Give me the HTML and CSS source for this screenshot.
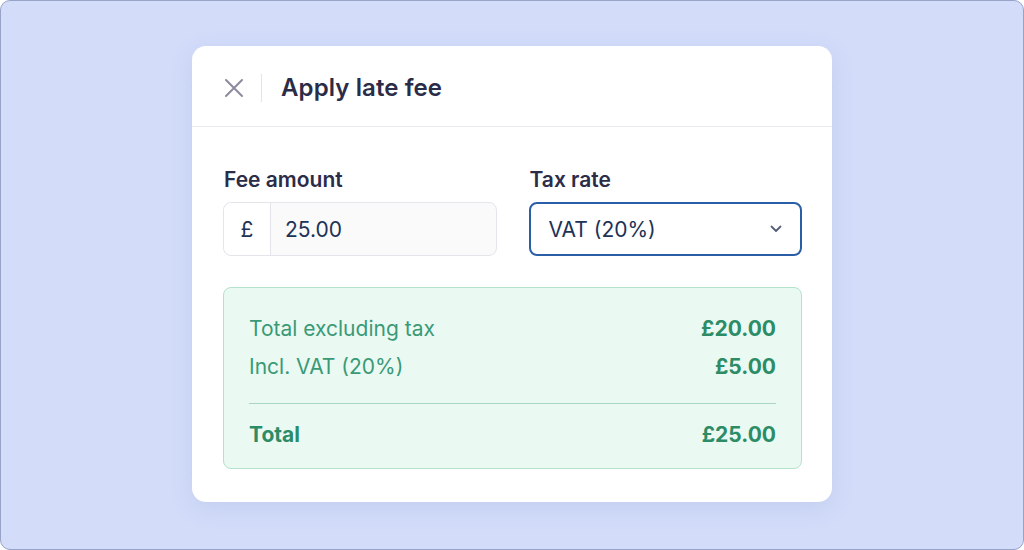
FILE: index.html
```html
<!DOCTYPE html>
<html lang="en">
<head>
<meta charset="UTF-8" />
<meta name="viewport" content="width=device-width, initial-scale=1" />
<title>Apply late fee</title>
<link rel="stylesheet" href="styles.css">
</head>
<body>

<div class="stage">
  <section class="dialog">
    <header class="dialog-head">
      <button class="close-btn" aria-label="Close">
        <svg width="20" height="20" viewBox="0 0 20 20" fill="none" stroke="currentColor" stroke-width="2" stroke-linecap="round">
          <path d="M2 2L18 18M18 2L2 18" />
        </svg>
      </button>
      <span class="head-divider"></span>
      <h1 class="dialog-title">Apply late fee</h1>
    </header>

    <div class="dialog-body">
      <div class="fields">
        <div class="field">
          <label class="field-label">Fee amount</label>
          <div class="money-input">
            <span class="currency">£</span>
            <span class="amount">25.00</span>
          </div>
        </div>
        <div class="field">
          <label class="field-label">Tax rate</label>
          <div class="select">
            <span>VAT (20%)</span>
            <svg width="12" height="8" viewBox="0 0 12 8" fill="none" stroke="currentColor" stroke-width="1.8" stroke-linecap="round" stroke-linejoin="round">
              <path d="M1.5 1.5L6 6L10.5 1.5" />
            </svg>
          </div>
        </div>
      </div>

      <div class="summary">
        <div class="summary-row">
          <span>Total excluding tax</span>
          <strong>£20.00</strong>
        </div>
        <div class="summary-row">
          <span>Incl. VAT (20%)</span>
          <strong>£5.00</strong>
        </div>
        <hr class="summary-rule">
        <div class="summary-row total">
          <span>Total</span>
          <strong>£25.00</strong>
        </div>
      </div>
    </div>
  </section>
</div>

</body>
</html>
```

FILE: styles.css
```css
* {
  box-sizing: border-box;
  margin: 0; padding: 0;
}
body {
  font-family: Inter, 'Noto Sans', sans-serif;
  width: 1024px;
  height: 550px;
  overflow: hidden;
}
.stage {
  width: 1024px;
  height: 550px;
  background: #d3ddfa;
  border: 1px solid #98a3c9;
  border-radius: 10px;
  padding-top: 45px;
  display: flex;
  justify-content: center;
  align-items: flex-start;
}
.dialog {
  width: 640px;
  background: #fff;
  border-radius: 14px;
  box-shadow: 0 6px 24px rgb(70 90 160 / 0.12);
}
.dialog-head {
  height: 81px;
  display: flex;
  align-items: center;
  padding: 3px 32px 0;
  border-bottom: 1px solid #e8e9ee;
}
.close-btn {
  background: none;
  border: none;
  color: #8a8b9c;
  width: 20px;
  height: 20px;
  display: flex;
  cursor: pointer;
}
.head-divider {
  width: 1px;
  height: 28px;
  background: #e3e4ea;
  margin: 0 19px 0 17px;
}
.dialog-title {
  font-size: 24px;
  font-weight: 600;
  color: #2b2c48;
  letter-spacing: 0.1px;
}
.dialog-body {
  padding: 39px 30px 33px 31px;
}
.fields {
  display: grid;
  grid-template-columns: 1fr 1fr;
  gap: 32px;
}
.field {
  display: flex;
  flex-direction: column;
  gap: 8px;
}
.field-label {
  font-size: 21px;
  font-weight: 600;
  color: #2b2c48;
  line-height: 28px;
  padding-left: 1px;
}
.money-input {
  height: 54px;
  display: flex;
  border: 1px solid #e4e5ea;
  border-radius: 8px;
  background: #fafafa;
  font-size: 21px;
  color: #203256;
}
.currency {
  width: 47px;
  display: flex;
  align-items: center;
  justify-content: center;
  border-right: 1px solid #e4e5ea;
  background: #fff;
  border-radius: 8px 0 0 8px;
}
.amount {
  display: flex;
  align-items: center;
  padding-left: 14px;
}
.select {
  height: 54px;
  display: flex;
  align-items: center;
  justify-content: space-between;
  border: 2px solid #2a5ea6;
  border-radius: 8px;
  padding: 0 18px 0 18px;
  font-size: 21px;
  color: #203256;
}
.select svg {
  color: #56607a;
}
.summary {
  margin-top: 31px;
  background: #ebf9f3;
  border: 1px solid #b3e2cd;
  border-radius: 8px;
  padding: 27px 25px 19px 25px;
  color: #3a9a76;
}
.summary-row {
  display: flex;
  justify-content: space-between;
  align-items: center;
  font-size: 21px;
  line-height: 28px;
  margin-bottom: 10px;
}
.summary-row strong {
  font-weight: 700;
  color: #2b8c66;
}
.summary-rule {
  border: none;
  border-top: 1px solid #a8d8c2;
  margin: 22px 0 17px;
}
.summary-row.total {
  margin-bottom: 0;
}
.summary-row.total span {
  font-weight: 700;
  color: #2b8c66;
}
```
